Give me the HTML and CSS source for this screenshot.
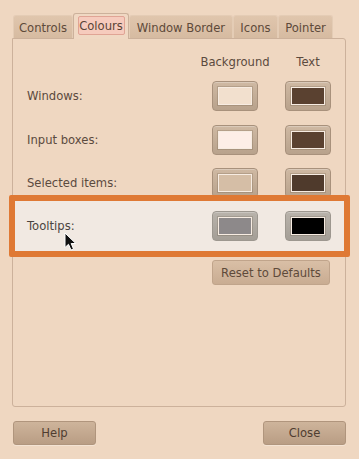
FILE: index.html
```html
<!DOCTYPE html>
<html>
<head>
<meta charset="utf-8">
<link rel="stylesheet" href="styles.css">
</head>
<body>
<div class="window">
  <div class="tabs">
    <div class="tab w-controls">Controls</div>
    <div class="tab active w-colours"><span class="focus">Colours</span></div>
    <div class="tab w-border">Window Border</div>
    <div class="tab w-icons">Icons</div>
    <div class="tab w-pointer">Pointer</div>
  </div>
  <div class="panel">
    <div class="header">
      <div class="col-head"><span>Background</span></div>
      <div class="col-head"><span>Text</span></div>
    </div>
    <div class="row r1">
      <div class="label">Windows:</div>
      <div class="swatch"><div class="chip c-win-bg"></div></div>
      <div class="swatch"><div class="chip c-win-fg"></div></div>
    </div>
    <div class="row r2">
      <div class="label">Input boxes:</div>
      <div class="swatch"><div class="chip c-in-bg"></div></div>
      <div class="swatch"><div class="chip c-in-fg"></div></div>
    </div>
    <div class="row r3">
      <div class="label">Selected items:</div>
      <div class="swatch"><div class="chip c-sel-bg"></div></div>
      <div class="swatch"><div class="chip c-sel-fg"></div></div>
    </div>
    <div class="row tips">
      <div class="label">Tooltips:</div>
      <div class="swatch gray"><div class="chip c-tip-bg"></div></div>
      <div class="swatch gray"><div class="chip c-tip-fg"></div></div>
    </div>
    <div class="reset-wrap">
      <div class="btn reset">Reset to Defaults</div>
    </div>
  </div>
  <div class="footer">
    <div class="btn dlg">Help</div>
    <div class="btn dlg">Close</div>
  </div>
</div>
<svg class="cursor" width="14" height="20" viewBox="0 0 14 20">
  <path d="M1 1 L1 15.5 L4.5 12.3 L7 18 L9.5 17 L7.2 11.5 L11.8 11.5 Z" fill="#111" stroke="#fff" stroke-width="1" stroke-linejoin="round"/>
</svg>
</body>
</html>
```

FILE: styles.css
```css
html, body {
  margin: 0;
  padding: 0;
}
body {
  width: 359px;
  height: 459px;
  background: #efd7c1;
  font-family: "DejaVu Sans", sans-serif;
  font-size: 11.6px;
  color: #5b4a3e;
  position: relative;
  overflow: hidden;
}
.window {
  padding: 13px 13px 0 12px;
  display: flex;
  flex-direction: column;
}
.tabs {
  display: flex;
  align-items: flex-end;
  height: 26px;
  padding-left: 1px;
  margin-bottom: -1px;
  position: relative;
  z-index: 1;
}
.tab {
  box-sizing: border-box;
  height: 23px;
  margin-bottom: 1px;
  display: flex;
  align-items: center;
  justify-content: center;
  white-space: nowrap;
  background: linear-gradient(#e0c6ad, #d6bba1);
  border: 1px solid #e4ccb5;
  border-bottom: none;
  border-radius: 3px 3px 0 0;
  color: #5e4a3a;
  padding-top: 2px;
}
.w-controls { width: 60px; }
.w-colours { width: 56px; }
.w-border { width: 104px; }
.w-icons { width: 45px; }
.w-pointer { width: 55px; }
.tab.active {
  height: 26px;
  margin-bottom: 0;
  background: #f0d8c3;
  border: 1px solid #ccb19b;
  border-bottom: none;
  padding-top: 0;
  padding-bottom: 2px;
}
.focus {
  display: flex;
  align-items: center;
  justify-content: center;
  box-sizing: border-box;
  width: 47px;
  height: 19px;
  background: #f6cbbd;
  border: 1px solid #e0a495;
  border-radius: 2px;
  color: #5a4436;
}
.panel {
  box-sizing: border-box;
  height: 369px;
  border: 1px solid #ccb19b;
  border-radius: 0 3px 3px 3px;
  padding: 16px 14px 0 14px;
  display: flex;
  flex-direction: column;
}
.header {
  display: flex;
  justify-content: flex-end;
  gap: 27px;
  height: 14px;
  line-height: 14px;
  margin-bottom: 12px;
}
.col-head {
  width: 46px;
  display: flex;
  justify-content: center;
  white-space: nowrap;
}
.row {
  display: flex;
  align-items: center;
  gap: 27px;
  height: 30px;
}
.r2 { margin-top: 14px; }
.r3 { margin-top: 13px; }
.label {
  flex: 1;
  white-space: nowrap;
}
.swatch {
  box-sizing: border-box;
  width: 46px;
  height: 30px;
  border: 1px solid #a8917c;
  border-radius: 4px;
  background: linear-gradient(#cfb9a3, #b8a28c);
  box-shadow: inset 0 1px 0 rgba(255,255,255,0.25);
  display: flex;
  align-items: center;
  justify-content: center;
}
.swatch.gray {
  border-color: #9d978f;
  background: linear-gradient(#b9b3ab, #a49e96);
}
.chip {
  box-sizing: border-box;
  width: 34px;
  height: 18px;
  border: 1px solid #f7ece2;
  box-shadow: 0 0 0 1px rgba(80,60,40,0.18);
}
.c-win-bg { background: #f2e0ce; }
.c-win-fg { background: #5a4130; }
.c-in-bg { background: #fdeee7; }
.c-in-fg { background: #5a4130; }
.c-sel-bg { background: #d5bea6; }
.c-sel-fg { background: #4f3a2c; }
.c-tip-bg { background: #8d898a; }
.c-tip-fg { background: #000; }
.tips {
  position: relative;
  height: 50px;
  margin: 3px -13px 0 -12px;
  padding: 0 13px 0 12px;
  background: #f1e9e2;
  color: #4a4440;
}
.tips::after {
  content: "";
  position: absolute;
  left: -6px;
  top: -6px;
  right: -6px;
  bottom: -6px;
  border: 6px solid #df7934;
  border-radius: 2px;
  pointer-events: none;
}
.reset-wrap {
  display: flex;
  justify-content: flex-end;
  margin-top: 9px;
  padding-right: 1px;
}
.btn {
  box-sizing: border-box;
  display: flex;
  align-items: center;
  justify-content: center;
  white-space: nowrap;
  border-radius: 3px;
}
.reset {
  width: 118px;
  height: 25px;
  border: 1px solid #c0a48b;
  background: linear-gradient(#d9bfa6, #c9ac92);
  color: #5e4a3a;
}
.footer {
  display: flex;
  justify-content: space-between;
  margin-top: 14px;
  padding-left: 1px;
}
.dlg {
  width: 83px;
  height: 24px;
  border: 1px solid #b0957d;
  background: linear-gradient(#ceb49b, #b99d84);
  color: #4f3d30;
  box-shadow: 0 1px 0 rgba(255,255,255,0.3);
}
.cursor {
  position: absolute;
  left: 64px;
  top: 232px;
}
```
